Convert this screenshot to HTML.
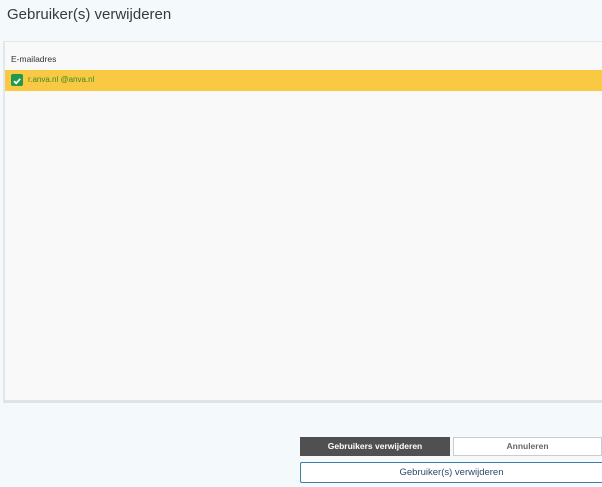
<!DOCTYPE html>
<html><head><meta charset="utf-8"><style>
html,body{margin:0;padding:0;width:602px;height:487px;overflow:hidden;background:#f4f9fc;font-family:"Liberation Sans",sans-serif;}
h1{position:absolute;left:7px;top:6px;margin:0;font-size:15px;font-weight:normal;color:#3a3a3a;}
.panel{position:absolute;left:3px;top:41px;width:599px;height:362px;background:#f9f9f9;border-left:2px solid #e4e6e7;border-top:1px solid #e4e6e7;border-bottom:3px solid #e0e3e4;box-sizing:border-box;}
.hdr{position:absolute;left:6px;top:12px;font-size:8.5px;color:#333;}
.row{position:absolute;left:0;top:28px;width:100%;height:21px;background:#f9c944;}
.cb{position:absolute;left:6px;top:4px;width:12px;height:12px;background:#1e9a4a;border-radius:2px;}
.row span{position:absolute;left:23px;top:5px;font-size:8px;color:#3b8a2a;}
.btn{position:absolute;box-sizing:border-box;font-size:8.5px;font-weight:bold;text-align:center;}
.b1{left:300px;top:437px;width:150px;height:19px;background:#505050;color:#fff;line-height:19px;}
.b2{left:453px;top:437px;width:149px;height:19px;background:#fff;border:1px solid #ccc;color:#666;line-height:17px;}
.b3{left:300px;top:462px;width:302px;height:21px;background:#fff;border:1px solid #3f7fa6;border-right:none;border-radius:2px 0 0 2px;color:#2a4a66;line-height:19px;font-weight:normal;font-size:9.5px;}
</style></head><body>
<h1>Gebruiker(s) verwijderen</h1>
<div class="panel">
<div class="hdr">E-mailadres</div>
<div class="row"><div class="cb"><svg width="12" height="12" viewBox="0 0 12 12"><path d="M3 6.2 L5.2 8.3 L9.2 3.8" stroke="#fff" stroke-width="1.8" fill="none"/></svg></div><span>r.anva.nl @anva.nl</span></div>
</div>
<div class="btn b1">Gebruikers verwijderen</div>
<div class="btn b2">Annuleren</div>
<div class="btn b3">Gebruiker(s) verwijderen</div>
</body></html>
